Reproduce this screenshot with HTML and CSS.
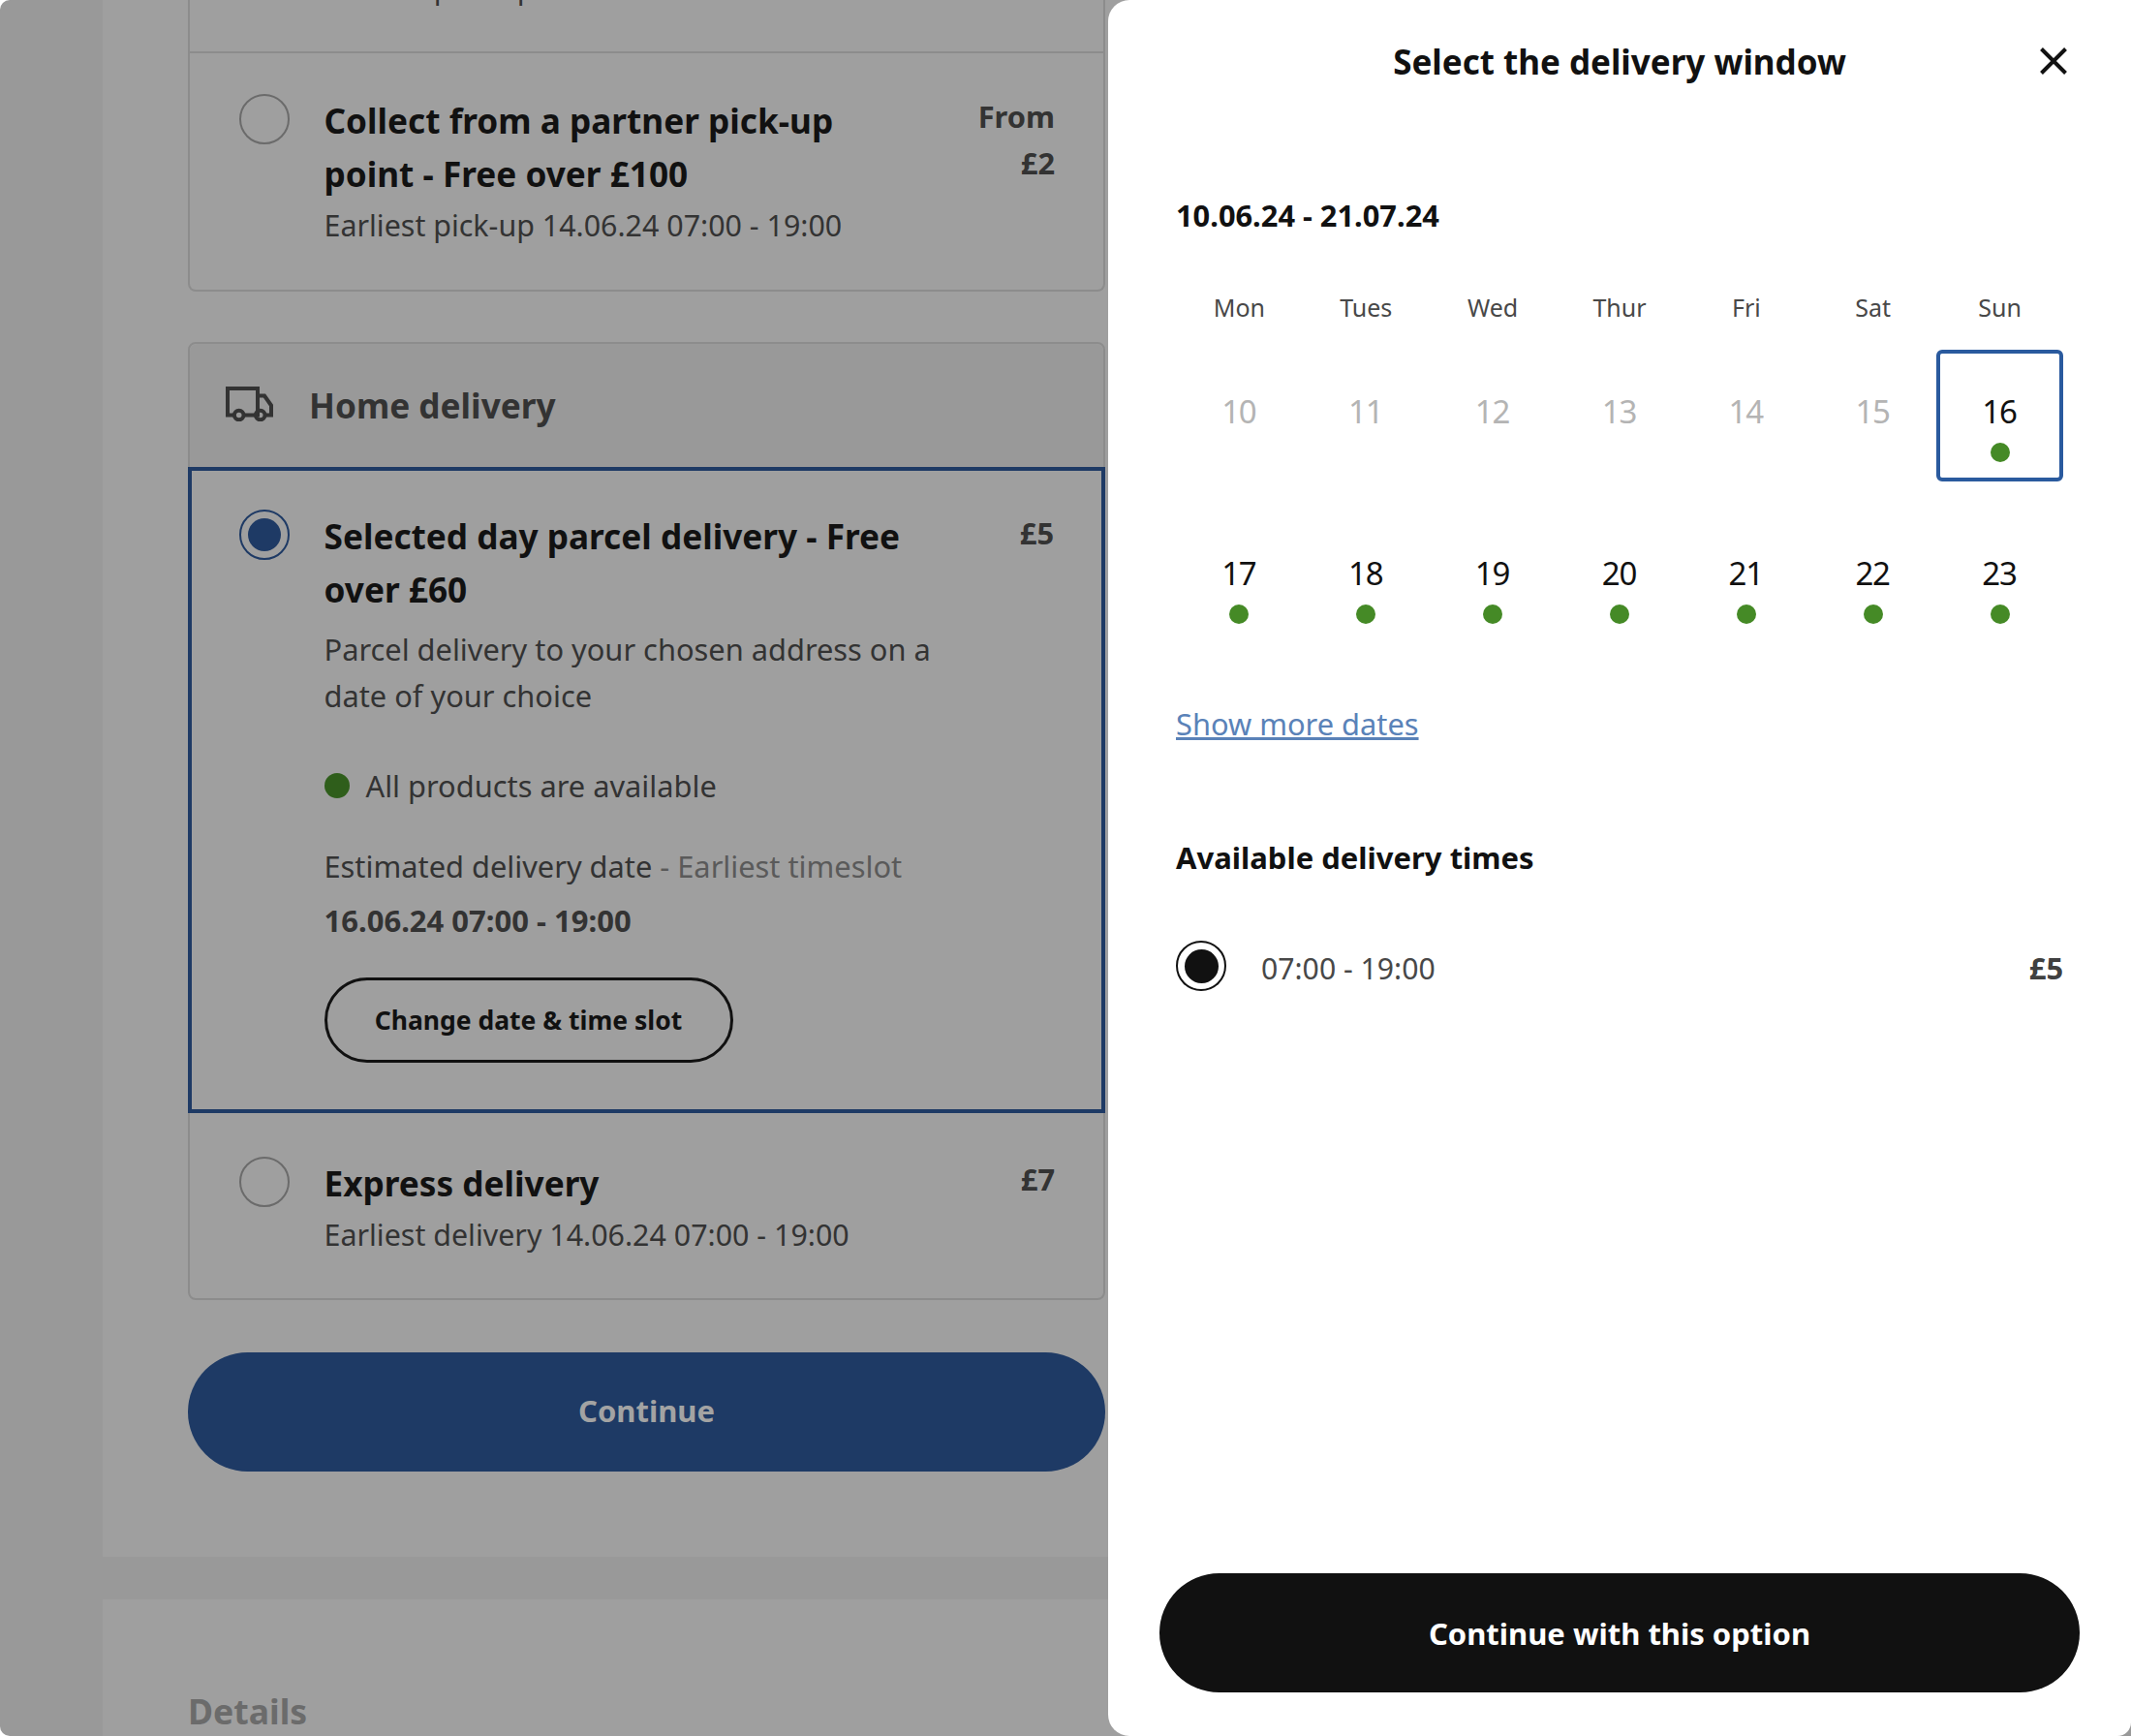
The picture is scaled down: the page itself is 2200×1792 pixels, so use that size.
FILE: index.html
```html
<!DOCTYPE html>
<html lang="en">
    <head>
        <meta charset="UTF-8" />
        <meta name="viewport" content="width=device-width, initial-scale=1.0" />
        <title>Select the delivery window</title>
        <link rel="stylesheet" href="styles.css">
    </head>
    <body>
        <div id="page">
            <div id="main">
                <div class="panel" id="delivery-panel">
                    <div class="group" id="collect-group">
                        <div class="option" id="cut-option">
                            <div class="option-sub">Earliest pick-up 14.06.24 07:00 - 19:00</div>
                        </div>
                        <div class="option" id="partner-option">
                            <span class="radio"></span>
                            <div class="option-body">
                                <div class="option-title">Collect from a partner pick-up point - Free over £100</div>
                                <div class="option-sub">Earliest pick-up 14.06.24 07:00 - 19:00</div>
                            </div>
                            <div class="price price-from">From<br>£2</div>
                        </div>
                    </div>
                    <div class="group" id="home-group">
                        <div class="group-head">
                            <svg class="truck" viewBox="0 0 49 36" width="49" height="36">
                                <path d="M8 29.500H2V2H33V29.500H20M33 9.500H40L47 19.500V29.500H42" fill="none" stroke="#333" stroke-width="4"/>
                                <circle cx="13.700" cy="29.500" r="4.800" fill="none" stroke="#333" stroke-width="4"/>
                                <circle cx="35.700" cy="29.500" r="4.800" fill="none" stroke="#333" stroke-width="4"/>
                            </svg>
                            <span>Home delivery</span>
                        </div>
                        <div class="option selected" id="parcel-option">
                            <span class="radio radio-on"></span>
                            <div class="option-body">
                                <div class="option-title">Selected day parcel delivery - Free over £60</div>
                                <div class="option-desc">Parcel delivery to your chosen address on a date of your choice</div>
                                <div class="stock"><span class="stock-dot"></span>All products are available</div>
                                <div class="estimate">Estimated delivery date <span class="estimate-note">- Earliest timeslot</span></div>
                                <div class="estimate-date">16.06.24 07:00 - 19:00</div>
                                <button class="change-btn">Change date &amp; time slot</button>
                            </div>
                            <div class="price">£5</div>
                        </div>
                        <div class="option" id="express-option">
                            <span class="radio"></span>
                            <div class="option-body">
                                <div class="option-title">Express delivery</div>
                                <div class="option-sub">Earliest delivery 14.06.24 07:00 - 19:00</div>
                            </div>
                            <div class="price">£7</div>
                        </div>
                    </div>
                    <button id="continue">Continue</button>
                </div>
                <div class="panel" id="details-panel">Details</div>
            </div>
        </div>

        <div id="drawer">
            <div id="drawer-head">
                <div id="drawer-title">Select the delivery window</div>
                <svg id="close" viewBox="0 0 28 28" width="28" height="28">
                    <path d="M1.500 1.500L26.500 26.500M26.500 1.500L1.500 26.500" fill="none" stroke="#111" stroke-width="4"/>
                </svg>
            </div>
            <div id="date-range">10.06.24 - 21.07.24</div>
            <div id="calendar">
                <div class="weekday">Mon</div>
                <div class="weekday">Tues</div>
                <div class="weekday">Wed</div>
                <div class="weekday">Thur</div>
                <div class="weekday">Fri</div>
                <div class="weekday">Sat</div>
                <div class="weekday">Sun</div>
                <div class="day off">10</div>
                <div class="day off">11</div>
                <div class="day off">12</div>
                <div class="day off">13</div>
                <div class="day off">14</div>
                <div class="day off">15</div>
                <div class="day active">16<span class="dot"></span></div>
                <div class="day">17<span class="dot"></span></div>
                <div class="day">18<span class="dot"></span></div>
                <div class="day">19<span class="dot"></span></div>
                <div class="day">20<span class="dot"></span></div>
                <div class="day">21<span class="dot"></span></div>
                <div class="day">22<span class="dot"></span></div>
                <div class="day">23<span class="dot"></span></div>
            </div>
            <a id="more-dates" href="#">Show more dates</a>
            <div id="times-title">Available delivery times</div>
            <div id="time-row">
                <span class="radio radio-black"></span>
                <span id="time-label">07:00 - 19:00</span>
                <span id="time-price">£5</span>
            </div>
            <button id="confirm">Continue with this option</button>
        </div>
    </body>
</html>
```

FILE: styles.css
```css
* {
    box-sizing: border-box;
}
body {
    margin: 0;
    height: 1792px;
    overflow: hidden;
    position: relative;
    background-color: #ffffff;
    font-family: "Noto Sans", sans-serif;
    color: #333333;
}
button {
    font-family: inherit;
    font-weight: 700;
    cursor: pointer;
}
#page {
    height: 1792px;
    background-color: #999999;
    padding-left: 106px;
    border-radius: 10px 0 0 10px;
    overflow: hidden;
}
#main {
    width: 1100px;
    display: flex;
    flex-direction: column;
    gap: 44px;
    margin-top: -56px;
}
.panel {
    background-color: #9f9f9f;
    padding: 0 0 88px 88px;
}
.group {
    width: 947px;
    border: 2px solid #8c8c8c;
    border-radius: 8px;
}
#collect-group {
    margin-bottom: 52px;
    border-top: none;
    border-radius: 0 0 8px 8px;
}
#home-group {
    margin-bottom: 54px;
}
.option {
    display: flex;
    padding: 40px 50px 0 51px;
}
#cut-option {
    height: 111px;
    padding: 0 0 0 139px;
    align-items: flex-end;
    border-bottom: 2px solid #8c8c8c;
}
#cut-option .option-sub {
    margin-bottom: 39px;
}
#partner-option {
    height: 244px;
    padding-top: 42px;
}
#parcel-option {
    height: 667px;
    margin: 0 -2px;
    border: 4px solid #1e3a65;
    padding: 40px 49px 0 49px;
}
#express-option {
    height: 191px;
    padding-top: 45px;
}
#express-option .price {
    margin-top: -1px;
}
.radio {
    flex: none;
    width: 52px;
    height: 52px;
    border-radius: 50%;
    border: 2px solid #6b6b6b;
    margin-right: 35.500px;
    display: flex;
    align-items: center;
    justify-content: center;
}
.radio-on {
    border-color: #1e3a65;
}
.radio-on::after {
    content: "";
    width: 34px;
    height: 34px;
    border-radius: 50%;
    background-color: #1e3a65;
}
.radio-black {
    border-color: #111111;
    margin-right: 36px;
}
.radio-black::after {
    content: "";
    width: 35px;
    height: 35px;
    border-radius: 50%;
    background-color: #111111;
}
.option-body {
    flex: 1;
    min-width: 0;
}
.option-title {
    font-size: 35.2px;
    font-weight: 700;
    line-height: 55px;
    color: #111111;
    max-width: 620px;
}
.option-sub {
    font-size: 30.4px;
    line-height: 52px;
    white-space: nowrap;
}
.option-desc {
    font-size: 30.8px;
    line-height: 48px;
    margin-top: 10px;
    max-width: 640px;
}
.price {
    font-size: 30.8px;
    font-weight: 700;
    line-height: 48px;
    text-align: right;
    white-space: nowrap;
    margin-top: 0;
}
.price-from {
    margin-top: -1px;
}
.group-head {
    height: 127px;
    background-color: #999999;
    display: flex;
    align-items: center;
    gap: 37px;
    padding: 0 0 2px 37px;
    font-size: 35.2px;
    font-weight: 700;
    border-radius: 8px 8px 0 0;
}
.truck {
    flex: none;
    margin-top: -2px;
}
.stock {
    display: flex;
    align-items: center;
    font-size: 30.8px;
    line-height: 48px;
    margin-top: 45px;
}
.stock-dot {
    width: 26px;
    height: 26px;
    border-radius: 50%;
    background-color: #2f5e1b;
    margin-right: 17px;
}
.estimate {
    font-size: 30.8px;
    line-height: 48px;
    margin-top: 35px;
}
.estimate-note {
    color: #5a5a5a;
}
.estimate-date {
    font-size: 31px;
    font-weight: 700;
    line-height: 48px;
    margin-top: 8px;
}
.change-btn {
    display: block;
    width: 422px;
    height: 88px;
    margin-top: 35px;
    border: 3px solid #111111;
    border-radius: 44px;
    background: none;
    font-size: 26.5px;
    color: #111111;
    padding: 0;
}
#continue {
    display: block;
    width: 947px;
    height: 123px;
    border: none;
    border-radius: 62px;
    background-color: #1e3a65;
    color: #a3a3a3;
    font-size: 31px;
    padding: 0 0 3px;
}
#details-panel {
    height: 200px;
    padding: 91px 0 0 88px;
    font-size: 35.6px;
    font-weight: 700;
    color: #6b6b6b;
}
#drawer {
    position: absolute;
    top: 0;
    left: 1144px;
    width: 1056px;
    height: 1792px;
    background-color: #ffffff;
    border-radius: 22px 0 14px 22px;
    padding: 0 70px;
}
#drawer-head {
    height: 128px;
    position: relative;
    display: flex;
    align-items: center;
    justify-content: center;
    padding-bottom: 2px;
}
#drawer-title {
    font-size: 35px;
    font-weight: 700;
    color: #111111;
}
#close {
    position: absolute;
    right: -4px;
    top: 49px;
}
#date-range {
    margin-top: 72px;
    font-size: 30.8px;
    font-weight: 700;
    line-height: 44px;
    color: #111111;
}
#calendar {
    margin-top: 61px;
    display: grid;
    grid-template-columns: repeat(7, 1fr);
    grid-template-rows: 25px 136px 136px;
    row-gap: 31px;
}
.weekday {
    font-size: 25px;
    line-height: 25px;
    text-align: center;
    color: #484848;
}
.day {
    font-size: 33px;
    letter-spacing: -1.200px;
    text-indent: -1.200px;
    line-height: 44px;
    color: #111111;
    text-align: center;
    padding-top: 42px;
}
.day.off {
    color: #b4b4b4;
}
.day.active {
    border: 4px solid #2a5a9e;
    border-radius: 6px;
    padding-top: 38px;
}
.dot {
    display: block;
    width: 20px;
    height: 20px;
    border-radius: 50%;
    background-color: #458a26;
    margin: 10px auto 0;
}
#more-dates {
    display: inline-block;
    margin-top: 61px;
    font-size: 30.8px;
    line-height: 44px;
    color: #5a82b8;
}
#times-title {
    margin-top: 94px;
    font-size: 31px;
    font-weight: 700;
    line-height: 44px;
    color: #111111;
}
#time-row {
    margin-top: 64px;
    display: flex;
    align-items: center;
    font-size: 30.2px;
}
#time-label {
    color: #484848;
    margin-top: 4px;
}
#time-price {
    margin-left: auto;
    margin-top: 4px;
    font-size: 30.8px;
    font-weight: 700;
    color: #404040;
}
#confirm {
    position: absolute;
    left: 53px;
    top: 1624px;
    width: 950px;
    height: 123px;
    border: none;
    border-radius: 62px;
    background-color: #111111;
    color: #ffffff;
    font-size: 31px;
}
```
